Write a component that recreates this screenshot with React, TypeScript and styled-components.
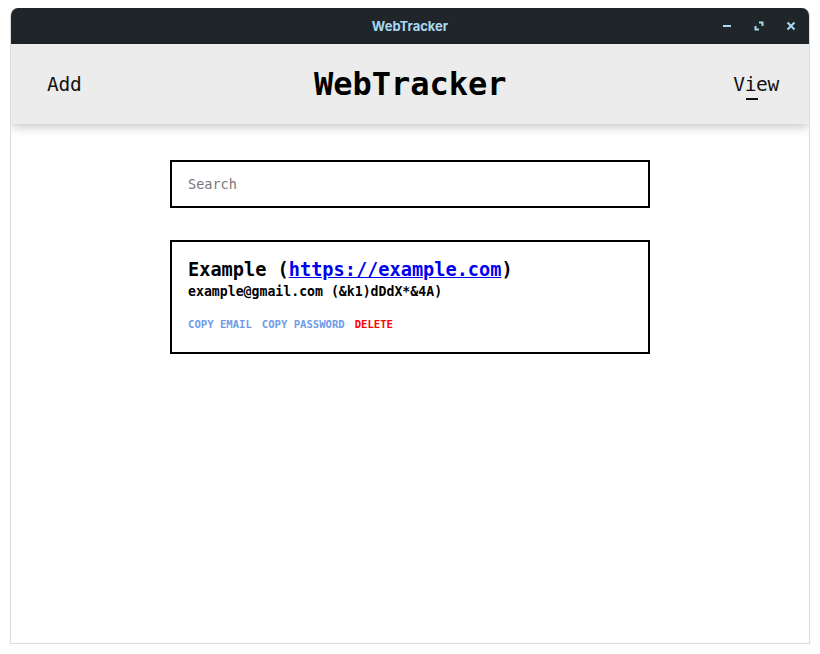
import styled, { createGlobalStyle } from "styled-components";

const GlobalStyle = createGlobalStyle`
  html, body {
    margin: 0;
    padding: 0;
    background: #ffffff;
  }
  * {
    box-sizing: border-box;
  }
`;

const Window = styled.div`
  display: flex;
  flex-direction: column;
  margin: 8px 10px 10px;
  height: 636px;
  border: 1px solid #dcdcdc;
  border-top: none;
  border-radius: 8px 8px 0 0;
  overflow: hidden;
  background: #ffffff;
`;

const TitleBar = styled.div`
  display: grid;
  grid-template-columns: 1fr auto 1fr;
  align-items: center;
  height: 36px;
  padding: 0 10px;
  background-color: #1f2529;
  color: #a9d8f2;
  font-family: "Inter", "Liberation Sans", sans-serif;
  font-size: 13px;
  font-weight: 700;
`;

const TitleText = styled.span`
  grid-column: 2;
`;

const WindowButtons = styled.div`
  grid-column: 3;
  display: flex;
  justify-content: flex-end;
  align-items: center;
  gap: 16px;
`;

const WindowButton = styled.span`
  display: flex;
  width: 16px;
  height: 16px;
  align-items: center;
  justify-content: center;
`;

const Header = styled.header`
  position: relative;
  z-index: 1;
  display: flex;
  align-items: center;
  justify-content: space-between;
  height: 80px;
  padding: 0 30px 0 36px;
  background-color: #ececec;
  box-shadow: 0 3px 10px rgba(0, 0, 0, 0.22);
  font-family: "DejaVu Sans Mono", monospace;
`;

const NavLink = styled.span`
  font-size: 19.5px;
  color: #111;
  letter-spacing: -0.3px;
`;

const Caret = styled.span`
  position: relative;
  &::after {
    content: "";
    position: absolute;
    left: 1px;
    right: -2px;
    bottom: -4px;
    height: 2px;
    background: #111;
  }
`;

const Brand = styled.h1`
  margin: 0 0 0 6px;
  font-size: 32px;
  font-weight: 700;
  color: #000;
`;

const Main = styled.main`
  flex: 1;
  display: flex;
  flex-direction: column;
  align-items: center;
  gap: 32px;
  padding-top: 36px;
  font-family: "DejaVu Sans Mono", monospace;
`;

const Search = styled.input`
  width: 480px;
  height: 48px;
  padding: 0 16px;
  border: 2px solid #000;
  border-radius: 0;
  outline: none;
  font-family: "DejaVu Sans Mono", monospace;
  font-size: 13.5px;
  &::placeholder {
    color: #777;
  }
`;

const Card = styled.div`
  width: 480px;
  height: 114px;
  padding: 15px 16px;
  border: 2px solid #000;
`;

const CardTitle = styled.div`
  font-size: 18.6px;
  font-weight: 700;
  line-height: 26px;
  color: #000;
  a {
    color: #0000ee;
  }
`;

const Credentials = styled.div`
  font-size: 13.2px;
  font-weight: 700;
  line-height: 18px;
  color: #000;
`;

const Actions = styled.div`
  display: flex;
  gap: 10px;
  margin-top: 17px;
`;

const Action = styled.button<{ $danger?: boolean }>`
  padding: 0;
  border: none;
  background: none;
  font-family: "DejaVu Sans Mono", monospace;
  font-size: 10.6px;
  font-weight: 700;
  color: ${props => (props.$danger ? "#ff0000" : "#6f9be8")};
  cursor: pointer;
`;

function App() {
  return (
    <>
      <GlobalStyle />
      <Window>
        <TitleBar>
          <TitleText>WebTracker</TitleText>
          <WindowButtons>
            <WindowButton>
              <svg width="10" height="10" viewBox="0 0 10 10">
                <rect x="1" y="4" width="8" height="2" fill="#a9d8f2" />
              </svg>
            </WindowButton>
            <WindowButton>
              <svg width="10" height="10" viewBox="0 0 10 10">
                <path d="M5 1.5 H8.5 V5 M1.5 5 V8.5 H5" stroke="#a9d8f2" strokeWidth="2" fill="none" />
              </svg>
            </WindowButton>
            <WindowButton>
              <svg width="10" height="10" viewBox="0 0 10 10">
                <path d="M1.5 1.5 L8.5 8.5 M8.5 1.5 L1.5 8.5" stroke="#a9d8f2" strokeWidth="2" />
              </svg>
            </WindowButton>
          </WindowButtons>
        </TitleBar>
        <Header>
          <NavLink>Add</NavLink>
          <Brand>WebTracker</Brand>
          <NavLink>
            V<Caret>i</Caret>ew
          </NavLink>
        </Header>
        <Main>
          <Search placeholder="Search" />
          <Card>
            <CardTitle>
              Example (<a href="#">https://example.com</a>)
            </CardTitle>
            <Credentials>example@gmail.com (&amp;k1)dDdX*&amp;4A)</Credentials>
            <Actions>
              <Action>COPY EMAIL</Action>
              <Action>COPY PASSWORD</Action>
              <Action $danger>DELETE</Action>
            </Actions>
          </Card>
        </Main>
      </Window>
    </>
  );
}

export default App;
